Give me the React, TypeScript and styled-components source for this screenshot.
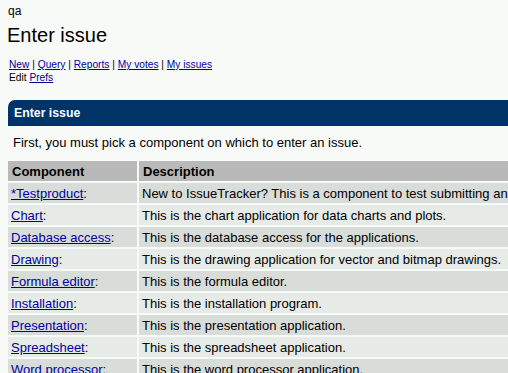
import styled, { createGlobalStyle } from 'styled-components';

const GlobalStyle = createGlobalStyle`
  html, body {
    margin: 0;
    padding: 0;
    background: #f8faf8;
    overflow: hidden;
  }
  body {
    font-family: "Liberation Sans", Arial, sans-serif;
    color: #000;
  }
`;

const Page = styled.div`
  padding: 0 0 0 8px;
  width: 700px;
`;

const Project = styled.div`
  font-size: 12px;
  padding: 4px 0 0 0;
  line-height: 14px;
`;

const Title = styled.h1`
  margin: 4px 0 0 -1px;
  font-size: 20px;
  font-weight: normal;
  line-height: 26px;
`;

const Nav = styled.div`
  margin: 10px 0 0 1px;
  font-size: 10.2px;
  line-height: 13px;
  a {
    color: #0000a0;
  }
`;

const Panel = styled.div`
  margin-top: 16px;
`;

const PanelHead = styled.div`
  background: #003366;
  color: #fff;
  font-weight: bold;
  font-size: 12.3px;
  height: 26px;
  line-height: 26px;
  padding-left: 6px;
  border-top-left-radius: 7px;
`;

const Intro = styled.p`
  margin: 0;
  padding: 9px 0 0 5px;
  font-size: 13px;
  line-height: 16px;
`;

const Table = styled.table`
  margin-top: 10px;
  border-collapse: separate;
  border-spacing: 0;
  font-size: 13px;
`;

const Th = styled.th`
  background: #b9b9b9;
  text-align: left;
  font-weight: bold;
  height: 20px;
  padding: 0 0 0 4px;
  border-bottom: 2px solid #f8faf8;
  border-right: 2px solid #f8faf8;
  &:first-child {
    width: 125px;
  }
`;

const Td = styled.td<{ $odd: boolean }>`
  background: ${(p) => (p.$odd ? '#d9ddd9' : '#e7ebe7')};
  height: 20px;
  padding: 0 0 0 3px;
  white-space: nowrap;
  border-bottom: 2px solid #f8faf8;
  border-right: 2px solid #f8faf8;
  a {
    color: #0000a0;
  }
`;

const rows = [
  ['*Testproduct', 'New to IssueTracker? This is a component to test submitting and tracking issues.'],
  ['Chart', 'This is the chart application for data charts and plots.'],
  ['Database access', 'This is the database access for the applications.'],
  ['Drawing', 'This is the drawing application for vector and bitmap drawings.'],
  ['Formula editor', 'This is the formula editor.'],
  ['Installation', 'This is the installation program.'],
  ['Presentation', 'This is the presentation application.'],
  ['Spreadsheet', 'This is the spreadsheet application.'],
  ['Word processor', 'This is the word processor application.'],
];

const App = () => {
  return (
    <Page>
      <GlobalStyle />
      <Project>qa</Project>
      <Title>Enter issue</Title>
      <Nav>
        <a href="#">New</a> | <a href="#">Query</a> | <a href="#">Reports</a> |{' '}
        <a href="#">My votes</a> | <a href="#">My issues</a>
        <br />
        Edit <a href="#">Prefs</a>
      </Nav>
      <Panel>
        <PanelHead>Enter issue</PanelHead>
        <Intro>First, you must pick a component on which to enter an issue.</Intro>
        <Table>
          <thead>
            <tr>
              <Th>Component</Th>
              <Th>Description</Th>
            </tr>
          </thead>
          <tbody>
            {rows.map(([name, desc], i) => (
              <tr key={name}>
                <Td $odd={i % 2 === 0}>
                  <a href="#">{name}</a>:
                </Td>
                <Td $odd={i % 2 === 0}>{desc}</Td>
              </tr>
            ))}
          </tbody>
        </Table>
      </Panel>
    </Page>
  );
};

export default App;
